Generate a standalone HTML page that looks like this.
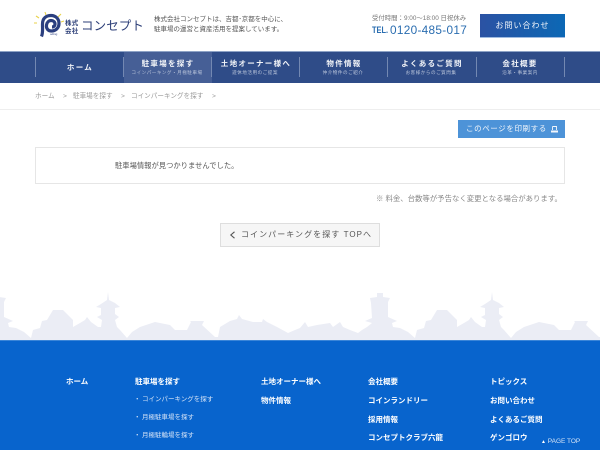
<!DOCTYPE html>
<html lang="ja"><head><meta charset="utf-8">
<style>
html,body{margin:0;padding:0}
body{width:600px;height:450px;overflow:hidden;position:relative;background:#fff;font-family:"Liberation Sans","Noto Sans CJK JP",sans-serif;color:#555}
.a{position:absolute;white-space:nowrap;line-height:1}
.nav{left:0;top:51px;width:600px;height:32px;background:#2f4c88;border-top:1px solid #8ea3c6;box-sizing:border-box}
.sep{position:absolute;top:57px;width:1px;height:20px;background:#7388b2}
.m{color:#f2f4f8;font-size:7.5px;letter-spacing:1.3px;font-weight:700;text-align:center;transform:translateX(-50%)}
.s{color:#b9c4da;font-size:4.6px;letter-spacing:.5px;text-align:center;transform:translateX(-50%)}
.f{color:#fff;font-size:7.5px;font-weight:700}
.fs{color:#d6e4f7;font-size:6.5px}
.b{font-size:6.6px;color:#999}
</style></head><body>

<svg class="a" style="left:33px;top:11px" width="34" height="28" viewBox="0 0 34 28">
<g stroke="#e8d24a" stroke-width="1.1" fill="none"><path d="M3 5l3 2M1 12h3M12 1l1 3M28 3l-3 3M31 10l-3 1"/></g>
<path d="M8.500 25.500C10 22 9.500 20 9.500 13 9.500 7 13.500 4.500 18 4.500 23 4.500 26 8 26 12.500 26 17 22.500 20 18.500 20 15 20 13 17.500 13.500 14 14 11 16 9.500 18 9.500 20.500 9.500 22 11 22 13 22 15 20.500 16 19 16" fill="none" stroke="#2b3f7f" stroke-width="3.200"/>
<text x="17" y="24" font-size="3" fill="#2b3f7f" font-family="Liberation Sans">oding</text>
</svg>
<div class="a" style="left:65px;top:20px;font-size:6.500px;font-weight:700;color:#2d3f78;line-height:7.500px;letter-spacing:.2px;white-space:normal;width:14px">株式<br>会社</div>
<div class="a" style="left:81px;top:20px;font-size:12.500px;color:#2d3f78;letter-spacing:.1px">コンセプト</div>
<div class="a" style="left:154px;top:17px;font-size:6.500px;color:#555">株式会社コンセプトは、吉都･京都を中心に、</div>
<div class="a" style="left:154px;top:27px;font-size:6.500px;color:#555">駐車場の運営と資産活用を提案しています。</div>

<div class="a" style="left:372px;top:16px;font-size:6.400px;color:#777">受付時間：9:00～18:00 日祝休み</div>
<div class="a" style="left:372px;top:26px;font-size:9.500px;font-weight:700;color:#2a6db0;transform:scaleX(.78);transform-origin:left top">TEL.</div>
<div class="a" style="left:390px;top:24.500px;font-size:11.800px;color:#2a6db0;letter-spacing:.3px">0120-485-017</div>
<div class="a" style="left:480px;top:14px;width:85px;height:23px;background:linear-gradient(90deg,#2b52a3,#0c68b5);border-bottom:1px solid #9fbbe0;color:#f2f5fa;font-size:8px;letter-spacing:1px;text-align:center;line-height:24px">お問い合わせ</div>

<div class="a nav"></div>
<div class="a" style="left:124px;top:52px;width:88px;height:31px;background:#465f96"></div>
<div class="sep" style="left:35px"></div><div class="sep" style="left:123px"></div><div class="sep" style="left:211px"></div><div class="sep" style="left:299px"></div><div class="sep" style="left:387px"></div><div class="sep" style="left:476px"></div><div class="sep" style="left:564px"></div>
<div class="a m" style="left:80px;top:64px">ホーム</div>
<div class="a m" style="left:168px;top:60px">駐車場を探す</div>
<div class="a s" style="left:167px;top:71px">コインパーキング・月極駐車場</div>
<div class="a m" style="left:256px;top:60px">土地オーナー様へ</div>
<div class="a s" style="left:255px;top:71px">遊休地活用のご提案</div>
<div class="a m" style="left:344px;top:60px">物件情報</div>
<div class="a s" style="left:343px;top:71px">仲介物件のご紹介</div>
<div class="a m" style="left:432px;top:60px">よくあるご質問</div>
<div class="a s" style="left:431px;top:71px">お客様からのご質問集</div>
<div class="a m" style="left:520px;top:60px">会社概要</div>
<div class="a s" style="left:520px;top:71px">沿革・事業案内</div>

<div class="a b" style="left:35px;top:94px">ホーム</div>
<div class="a b" style="left:63px;top:94px">&gt;</div>
<div class="a b" style="left:73px;top:94px">駐車場を探す</div>
<div class="a b" style="left:121px;top:94px">&gt;</div>
<div class="a b" style="left:131px;top:94px">コインパーキングを探す</div>
<div class="a b" style="left:212px;top:94px">&gt;</div>
<div class="a" style="left:0;top:109px;width:600px;height:1px;background:#eee"></div>

<div class="a" style="left:458px;top:120px;width:107px;height:18px;background:#4d93d8;color:#f2f6fb;font-size:7.500px;letter-spacing:.6px;line-height:18px;text-indent:8px">このページを印刷する</div>
<svg class="a" style="left:551px;top:126px" width="7" height="7" viewBox="0 0 7 7"><path d="M1.500.5h4v3.500M1.500.5v3.500" fill="none" stroke="#f2f6fb" stroke-width=".9"/><path d="M0 4.500h7v2H0z" fill="#f2f6fb"/></svg>

<div class="a" style="left:35px;top:147px;width:530px;height:37px;box-sizing:border-box;border:1px solid #e6e6e6"></div>
<div class="a" style="left:115px;top:162px;font-size:7.300px;color:#555">駐車場情報が見つかりませんでした。</div>
<div class="a" style="left:376px;top:195px;font-size:7.400px;color:#888">※ 料金、台数等が予告なく変更となる場合があります。</div>

<div class="a" style="left:220px;top:223px;width:160px;height:24px;box-sizing:border-box;background:#f6f6f6;border:1px solid #dedede"></div>
<svg class="a" style="left:229px;top:231px" width="7" height="8" viewBox="0 0 7 8"><path d="M5.500.8L1.800 4l3.700 3.200" fill="none" stroke="#555" stroke-width="1.100"/></svg>
<div class="a" style="left:241px;top:231px;font-size:8px;color:#555;letter-spacing:1.050px">コインパーキングを探す TOPへ</div>

<svg class="a" style="left:0;top:285px" width="600" height="55" viewBox="0 285 600 55">
<defs><path id="sky" fill="#ebedf5" d="M33 340V330L40 328 42 321 47 320 53 310H63L73 320 73 327 80 323 85 320 87 317 91 322 98 327 101 327 102 320 97 317 101 315 101 308 96 307 101 304 107 300 108 292 109 300 115 303 120 307 115 308 115 314 119 317 115 320 117 327 120 330 127 338 132 332 140 327 155 322 170 325 175 330 187 330 191 322 190 321H204L202 325 215 337 218 337 220 327 230 321 237 319 239 315 242 319 253 322 262 322 263 319 267 322 277 327 288 333 295 330 300 328 305 322 308 327 317 325 330 323 333 327 340 322 343 327 350 330 358 333 362 330 367 327 372 323 365 321 372 318 371 303 370 298 377 297 377 293H383L383 297 390 298 388 302 388 317 397 321 392 323 393 327 400 328 408 332 415 338 417 330V340Z"/></defs>
<use href="#sky" x="-384"/><use href="#sky"/><use href="#sky" x="384"/>
</svg>

<div class="a" style="left:0;top:340px;width:600px;height:110px;background:#0864cd;border-top:1px solid #3a85d8;box-sizing:border-box"></div>
<div class="a f" style="left:66px;top:378px">ホーム</div>
<div class="a f" style="left:135px;top:378px">駐車場を探す</div>
<div class="a fs" style="left:134px;top:397px">・</div><div class="a fs" style="left:142px;top:397px">コインパーキングを探す</div>
<div class="a fs" style="left:134px;top:415px">・</div><div class="a fs" style="left:142px;top:415px">月極駐車場を探す</div>
<div class="a fs" style="left:134px;top:433px">・</div><div class="a fs" style="left:142px;top:433px">月極駐輪場を探す</div>
<div class="a f" style="left:261px;top:378px">土地オーナー様へ</div>
<div class="a f" style="left:261px;top:397px">物件情報</div>
<div class="a f" style="left:368px;top:378px">会社概要</div>
<div class="a f" style="left:368px;top:397px">コインランドリー</div>
<div class="a f" style="left:368px;top:416px">採用情報</div>
<div class="a f" style="left:368px;top:434px">コンセプトクラブ六龍</div>
<div class="a f" style="left:490px;top:378px">トピックス</div>
<div class="a f" style="left:490px;top:397px">お問い合わせ</div>
<div class="a f" style="left:490px;top:416px">よくあるご質問</div>
<div class="a f" style="left:490px;top:434px">ゲンゴロウ</div>
<div class="a" style="left:541px;top:439px;font-size:6.500px;color:#d5e4f7"><span style="font-size:5px;color:#fff">▲</span> PAGE TOP</div>
</body></html>
